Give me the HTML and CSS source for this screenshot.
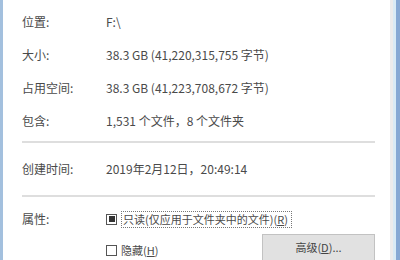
FILE: index.html
```html
<!DOCTYPE html>
<html lang="zh-CN">
<head>
    <meta charset="UTF-8">
    <title>属性</title>
    <link rel="stylesheet" href="styles.css">
</head>
<body>
    <div class="frame">
        <div class="inner">
            <div class="panel">
                <div class="info">
                    <div class="row"><span class="label">位置:</span><span class="value">F:\</span></div>
                    <div class="row"><span class="label">大小:</span><span class="value">38.3 GB (41,220,315,755 字节)</span></div>
                    <div class="row"><span class="label">占用空间:</span><span class="value">38.3 GB (41,223,708,672 字节)</span></div>
                    <div class="row"><span class="label">包含:</span><span class="value">1,531 个文件，8 个文件夹</span></div>
                </div>
                <div class="sep"></div>
                <div class="info dates">
                    <div class="row"><span class="label">创建时间:</span><span class="value">2019年2月12日，20:49:14</span></div>
                </div>
                <div class="sep"></div>
                <div class="attrs">
                    <span class="label attr-label">属性:</span>
                    <div class="attr-options">
                        <div class="check-row">
                            <span class="box mixed"></span>
                            <span class="focus">只读(仅应用于文件夹中的文件)(<u>R</u>)</span>
                        </div>
                        <div class="check-row second">
                            <div class="hidden-opt">
                                <span class="box"></span>
                                <span>隐藏(<u>H</u>)</span>
                            </div>
                            <button class="btn">高级(<u>D</u>)...</button>
                        </div>
                    </div>
                </div>
            </div>
        </div>
    </div>
</body>
</html>
```

FILE: styles.css
```css
html, body {
    margin: 0;
    padding: 0;
    background: #fff;
}

body {
    width: 400px;
    height: 260px;
    overflow: hidden;
    font-family: "Noto Sans CJK SC", "Noto Sans", sans-serif;
    font-size: 12px;
    color: #4a4a4a;
}

.frame {
    height: 260px;
    border-left: 3px solid #a3c0de;
    border-right: 4px solid #86a9d4;
}

.inner {
    height: 100%;
    border-right: 3px solid #d9ebf5;
}

.panel {
    height: 100%;
    border-right: 3px solid #ececec;
    padding: 5px 15px 0 19px;
    background: #fff;
}

.row {
    display: flex;
    height: 33px;
    align-items: center;
}

.label {
    width: 84px;
    flex: none;
}

.sep {
    height: 2px;
    background: #dedede;
    margin: 4px 0 0;
}

.dates {
    padding: 8px 0 6px;
}

.dates .row {
    height: 34px;
}

.attrs {
    display: flex;
    padding-top: 12px;
}

.attr-label {
    line-height: 20px;
}

.attr-options {
    flex: 1;
    font-size: 11px;
}

.check-row {
    display: flex;
    align-items: center;
    height: 20px;
}

.check-row.second {
    align-items: flex-start;
    height: auto;
}

.hidden-opt {
    display: flex;
    align-items: center;
    height: 20px;
    margin-top: 11px;
}

.box {
    width: 9px;
    height: 9px;
    border: 1px solid #555;
    background: #fff;
    margin-right: 4px;
    display: flex;
    align-items: center;
    justify-content: center;
    flex: none;
}

.box.mixed::after {
    content: '';
    width: 6px;
    height: 6px;
    background: #333;
}

.focus {
    border: 1px dotted #777;
    padding: 0 3px 0 1px;
    line-height: 15px;
}

.btn {
    margin-left: auto;
    margin-top: 5px;
    width: 113px;
    height: 32px;
    background: #e1e1e1;
    border: 1px solid #c2c2c2;
    font: inherit;
    color: #444;
    padding: 0 0 6px;
}
```
